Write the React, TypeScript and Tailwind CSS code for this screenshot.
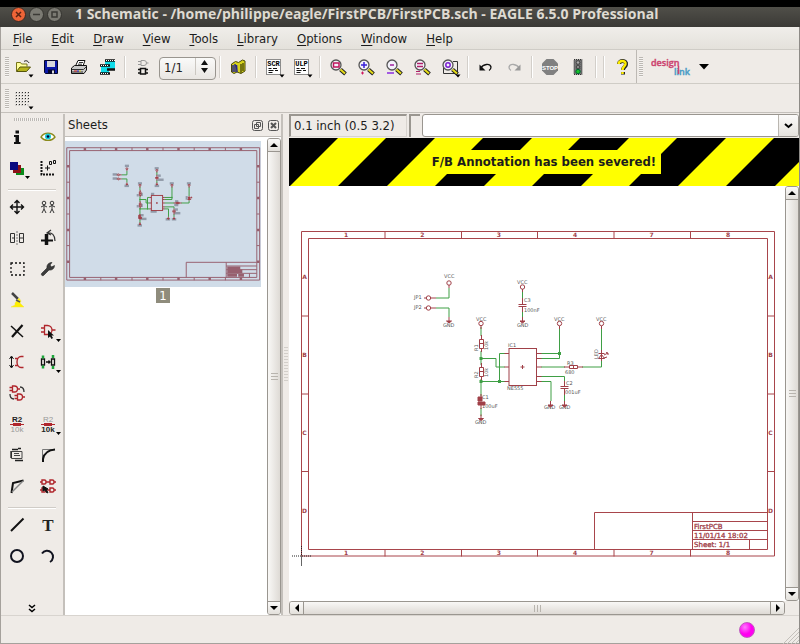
import type { ReactNode } from 'react';

const RED = '#a04048';
const GREEN = '#3f9f45';

/* ---------- shared pieces ---------- */

function Glyph({ children, drop }: { children: ReactNode; drop?: boolean }) {
  return (
    <svg viewBox="-14 -14 28 28" className="size-7 shrink-0" fill="none" stroke="#111" aria-hidden="true">
      {children}
      {drop && <path d="M5.500 7.500h5l-2.500 3z" fill="#000" stroke="none" />}
    </svg>
  );
}

function BarButton({ label, children, drop }: { label: string; children: ReactNode; drop?: boolean }) {
  return (
    <button type="button" aria-label={label} className="flex h-full w-7 shrink-0 items-center justify-center">
      <Glyph drop={drop}>{children}</Glyph>
    </button>
  );
}

function Separator() {
  return (
    <div className="flex h-full w-2 shrink-0 items-center justify-center">
      <div className="h-[22px] w-[2px] border-r border-l border-r-white border-l-[#d3cfca]" />
    </div>
  );
}

function Handle() {
  return (
    <div className="h-5 w-1 shrink-0 bg-[repeating-linear-gradient(180deg,#bcb8b3_0px,#bcb8b3_1px,#f6f4f2_1px,#f6f4f2_2px)]" />
  );
}

function Magnifier({ children }: { children: ReactNode }) {
  return (
    <>
      <path d="M2.500 2.500L7.500 7" stroke="#222" strokeWidth="4" />
      <path d="M2.500 2.500L7 6.500" stroke="#e6dc18" strokeWidth="2" />
      <circle cx="-2" cy="-2" r="5" fill="#f3f1fa" stroke="#555" strokeWidth="1.300" />
      {children}
    </>
  );
}

function ScriptSheet({ text }: { text: string }) {
  return (
    <>
      <rect x="-7.500" y="-7.500" width="14" height="15" fill="#fff" stroke="#222" strokeDasharray="1 1" />
      <text x="-0.500" y="-1" fontSize="7" fontWeight="700" fontFamily="Liberation Mono, monospace" textAnchor="middle" fill="#000" stroke="none">
        {text}
      </text>
      <path d="M-5.500 1.500h3M-1 1.500h4M-5.500 3.500h5M1 3.500h3M-5.500 5.500h4" />
    </>
  );
}

/* ---------- schematic ---------- */

type Label = { x: number; y: number; t: string; w: number; turn?: boolean };

const labels: Label[] = [
  { x: 444, y: 278, t: 'VCC', w: 8 },
  { x: 517, y: 284, t: 'VCC', w: 8 },
  { x: 476, y: 321, t: 'VCC', w: 8 },
  { x: 554, y: 321, t: 'VCC', w: 8 },
  { x: 596, y: 321, t: 'VCC', w: 8 },
  { x: 414, y: 299, t: 'JP1', w: 10 },
  { x: 414, y: 309, t: 'JP2', w: 10 },
  { x: 443, y: 327, t: 'GND', w: 9 },
  { x: 517, y: 327, t: 'GND', w: 9 },
  { x: 475, y: 424, t: 'GND', w: 9 },
  { x: 544, y: 409, t: 'GND', w: 9 },
  { x: 559, y: 409, t: 'GND', w: 9 },
  { x: 524, y: 302, t: 'C3', w: 6 },
  { x: 524, y: 312, t: '100nF', w: 13 },
  { x: 508, y: 347, t: 'IC1', w: 6 },
  { x: 507, y: 390, t: 'NE555', w: 13 },
  { x: 567, y: 365, t: 'R3', w: 6 },
  { x: 565, y: 374, t: '680', w: 8 },
  { x: 566, y: 385, t: 'C2', w: 6 },
  { x: 565, y: 394, t: '001uF', w: 13 },
  { x: 482, y: 399, t: 'C1', w: 6 },
  { x: 482, y: 408, t: '100uF', w: 13 },
  { x: 478, y: 351, t: 'R1', w: 6, turn: true },
  { x: 488, y: 350, t: '10k', w: 8, turn: true },
  { x: 478, y: 378, t: 'R2', w: 6, turn: true },
  { x: 488, y: 377, t: '10k', w: 8, turn: true },
  { x: 598, y: 359, t: 'LED', w: 9, turn: true },
];

const supplies = [[449, 283], [522.5, 287], [481, 323.5], [559.5, 323.5], [601.5, 323.5], [428.5, 298], [428.5, 308]];
const grounds = [[449, 321], [522.5, 321], [481, 418.5], [550.5, 405], [564.5, 405]];
const junctions = [[481, 358.5], [481, 381.5], [499.5, 381.5], [559.5, 353.5]];
const columns = ['1', '2', '3', '4', '7', '8'];
const rows = ['A', 'B', 'C', 'D'];

function Schematic({ thumb = false }: { thumb?: boolean }) {
  const sw = thumb ? 2.4 : 1;
  return (
    <g fill="none" strokeWidth={sw}>
      <g stroke={thumb ? '#97606f' : '#a8454b'}>
        <path d="M301.500 231.500H774.500V556H301.500ZM308.500 238.500H767.500V549.500H308.500Z" />
        {[385, 461.5, 537.5, 614, 690.5].map((x) => (
          <path key={x} d={`M${x} 231.500v7M${x} 549.500v7`} />
        ))}
        {[316, 394, 471.5].map((y) => (
          <path key={y} d={`M301.500 ${y}h7M767.500 ${y}h7`} />
        ))}
        <path d="M594.500 549.500V512.500H767.500M692.500 512.500V549.500M692.500 521.500H767.500M692.500 530.500H767.500M692.500 539.500H767.500M749.500 539.500V549.500" />
      </g>
      {thumb ? (
        <g fill="#97606f">
          {columns.map((c, i) => (
            <path key={c} d={`M${343 + i * 76.5} 232h6v6h-6zM${343 + i * 76.5} 550h6v6h-6z`} />
          ))}
          {rows.map((r, i) => (
            <path key={r} d={`M302 ${274 + i * 78}h6v6h-6zM768 ${274 + i * 78}h6v6h-6z`} />
          ))}
          <path d="M695 523h32v7h5v9h-37zM695 541h24v7h-24zM722 541h14v7h-14z" />
        </g>
      ) : (
        <g fill={RED} fontFamily="DejaVu Sans, sans-serif" fontSize="6" fontWeight="700">
          {columns.map((c, i) => (
            <g key={c} textAnchor="middle">
              <text x={346 + i * 76.4} y="237">{c}</text>
              <text x={346 + i * 76.4} y="555">{c}</text>
            </g>
          ))}
          {rows.map((r, i) => (
            <g key={r} textAnchor="middle">
              <text x="304.500" y={279 + i * 78}>{r}</text>
              <text x="770.500" y={279 + i * 78}>{r}</text>
            </g>
          ))}
          <g fontSize="7" fontWeight="400" stroke={RED} strokeWidth="0.300">
            <text x="694" y="529">FirstPCB</text>
            <text x="694" y="538">11/01/14 18:02</text>
            <text x="694" y="547">Sheet: 1/1</text>
          </g>
        </g>
      )}
      <path
        stroke={GREEN}
        d="M449 288V298H436M436 308H449V317M522.500 291V299M522.500 311V318M481 327V336M481 351V365M481 358.500H496V367H505M481 379V396M481 381.500H505M499.500 381.500V353.500H505M481 408V416M541 353.500H559.500V327M559.500 353.500V358.500H541M541 367H565M582 367H601.500V361M601.500 327V350M541 376.500H564.500V381M541 381.500H551V401M564.500 394V401"
      />
      <g fill={GREEN}>
        {junctions.map(([x, y]) => (
          <rect key={`${x}-${y}`} x={x - 1.5} y={y - 1.5} width="3" height="3" />
        ))}
      </g>
      {labels.map((l) =>
        thumb ? (
          <rect
            key={`${l.x}-${l.y}`}
            x={l.turn ? l.x - 5 : l.x}
            y={l.turn ? l.y - l.w : l.y - 5}
            width={l.turn ? 5 : l.w + 2}
            height={l.turn ? l.w : 6}
            fill="#7d8694"
            fillOpacity="0.750"
          />
        ) : (
          <text
            key={`${l.x}-${l.y}`}
            x={l.x}
            y={l.y}
            fontSize="5"
            fontFamily="DejaVu Sans, sans-serif"
            fill="#555"
            transform={l.turn ? `rotate(-90 ${l.x} ${l.y})` : undefined}
          >
            {l.t}
          </text>
        ),
      )}
      <g stroke={RED}>
        <rect x="509" y="348.500" width="27.500" height="37" />
        <path d="M522.500 365v4M520.500 367h4M504.500 353.500H509M504.500 367H509M504.500 381.500H509M537 353.500h4.500M537 358.500h4.500M537 367h4.500M537 376.500h4.500M537 381.500h4.500" />
        <path d="M481.500 335v4M481.500 349v3M479.500 339.500h4v9h-4zM479.500 343.500h4M481.500 363v4M481.500 377v3M479.500 367.500h4v9h-4zM479.500 371.500h4" />
        <path d="M564 367h5M578 367h5M569.500 365.500h8v3h-8zM573.500 365v4" />
        <path d="M522.500 298v6M522.500 307v5M518.500 304.500h8M518.500 306.500h8M564.500 381v5M564.500 389v6M560.500 386.500h8M560.500 388.500h8" />
        <path d="M481 394v4M481 405v4M478 403.500h6" />
        <path d="M478 397h4v4h-4zM478 402h7v3h-7z" fill={RED} />
        <path d="M598.500 353.500h6M601.500 350v11M598.500 358.500h6l-3-4zM604 355l4-2M604 358l3-1M606 352.500l2 0.500v2" />
        {supplies.map(([x, y]) => (
          <circle key={`${x}-${y}`} cx={x} cy={y} r="2.200" fill={thumb ? 'none' : '#fff'} />
        ))}
        <path d="M449 285v3M522.500 289v3M481 326v3M559.500 326v3M601.500 326v3M431 298h5M431 308h5M424 298h2M424 308h2" />
        {grounds.map(([x, y]) => (
          <path key={`${x}-${y}`} d={`M${x} ${y - 4}v4M${x - 2.5} ${y}h5l-2.500 2z`} fill={RED} />
        ))}
      </g>
      {!thumb && (
        <g stroke="#222">
          <path d="M292 556H312" strokeDasharray="1 1" />
          <path d="M301.500 546V556" strokeDasharray="1 1" />
          <path d="M301.500 556V566" stroke="#666" />
        </g>
      )}
    </g>
  );
}

/* ---------- scroll bars ---------- */

function ScrollArrow({ label, d, className }: { label: string; d: string; className: string }) {
  return (
    <button type="button" aria-label={label} className={`flex shrink-0 items-center justify-center bg-linear-to-b from-[#fbfaf9] to-[#e3e0db] ${className}`}>
      <svg viewBox="0 0 8 8" className="size-2" fill="#000" aria-hidden="true">
        <path d={d} />
      </svg>
    </button>
  );
}

function VerticalScroll() {
  return (
    <div className="flex w-[14px] shrink-0 flex-col rounded-[3px] border border-[#9a9690] bg-linear-to-r from-[#f9f8f6] to-[#dedad5]">
      <ScrollArrow label="Scroll up" d="M0 6h8L4 2z" className="h-[13px] rounded-t-[2px] border-b border-[#9a9690]" />
      <div className="flex flex-1 items-center justify-center">
        <div className="h-[7px] w-[7px] bg-[repeating-linear-gradient(180deg,#b8b4ae_0px,#b8b4ae_1px,transparent_1px,transparent_3px)]" />
      </div>
      <ScrollArrow label="Scroll down" d="M0 2h8L4 6z" className="h-[13px] rounded-b-[2px] border-t border-[#9a9690]" />
    </div>
  );
}

function HorizontalScroll() {
  return (
    <div className="flex h-[14px] flex-1 rounded-[3px] border border-[#9a9690] bg-linear-to-b from-[#f9f8f6] to-[#dedad5]">
      <ScrollArrow label="Scroll left" d="M6 0v8L2 4z" className="w-[14px] rounded-l-[2px] border-r border-[#9a9690]" />
      <div className="flex flex-1 items-center justify-center">
        <div className="h-[7px] w-[7px] bg-[repeating-linear-gradient(90deg,#b8b4ae_0px,#b8b4ae_1px,transparent_1px,transparent_3px)]" />
      </div>
      <ScrollArrow label="Scroll right" d="M2 0v8l4-4z" className="w-[14px] rounded-r-[2px] border-l border-[#9a9690]" />
    </div>
  );
}

/* ---------- left tool palette ---------- */

const andGate = 'M-2 -3h2a3 3 0 0 1 0 6h-2zM-5 -1.500h3M-5 1.500h3M3 0h2.500';

function Person({ x }: { x: number }) {
  return (
    <g transform={`translate(${x} 0)`} stroke="#333">
      <circle cx="0" cy="-4" r="1.800" />
      <path d="M0 -2V2L-2 6M0 2L2 6M-3 0L0 -1.500L3 0" />
    </g>
  );
}

const topTools: [string, ReactNode, boolean?][] = [
  ['Info', <path key="i" d="M-1.500 -6.500h3.500v3h-3.500zM-3 -2h5v7h1.500v2h-6.500v-2h1.500v-5h-1.500z" fill="#111" stroke="none" />],
  ['Show', (
    <g key="e">
      <path d="M-7 0C-4 -5 4 -5 7 0C4 4.500 -4 4.500 -7 0z" fill="#fff" stroke="#8b8a1d" strokeWidth="1.400" />
      <circle cx="0" cy="-0.500" r="3" fill="#19c8d8" stroke="none" />
      <circle cx="0" cy="-0.500" r="1.300" fill="#003" stroke="none" />
    </g>
  )],
  ['Layers', (
    <g key="l" stroke="none">
      <rect x="-1" y="0" width="8" height="7" fill="#0a8a1a" />
      <rect x="-4" y="-3" width="8" height="8" fill="#8c1218" />
      <rect x="-7" y="-6" width="8" height="8" fill="#0a0a80" />
    </g>
  ), true],
  ['Mark', (
    <g key="m">
      <path d="M-6.500 -7V6.500H7" strokeWidth="2" strokeDasharray="2 1" />
      <path d="M-3 0h5M-0.500 -2.500v5M1.500 -6.500h2v3h-2zM5.500 -7.500h2v3h-2z" />
    </g>
  )],
];

const editTools: [string, ReactNode, boolean?][] = [
  ['Move', <path key="a" d="M-6.500 0H6.500M0 -6.500V6.500M-4 -2.500L-6.500 0L-4 2.500M4 -2.500L6.500 0L4 2.500M-2.500 -4L0 -6.500L2.500 -4M-2.500 4L0 6.500L2.500 4" strokeWidth="1.400" />],
  ['Copy', <g key="b"><Person x={-4} /><Person x={4} /></g>],
  ['Mirror', (
    <g key="c">
      <path d="M-6.500 -4.500H-2.500V4.500H-6.500zM-5 0H-2.500M2.500 -4.500H6.500M2.500 4.500H6.500M2.500 -4.500V4.500M2.500 0H6.500M6.500 -4.500V4.500" stroke="#333" />
      <path d="M0 -7V7" stroke="#777" strokeDasharray="2 1" />
    </g>
  )],
  ['Rotate', (
    <g key="d">
      <path d="M-1.500 -4V7" strokeWidth="3.500" />
      <path d="M-7 2.500H5" strokeWidth="2" />
      <path d="M-1 -5C4 -6 7 -3 7 3M3 -8L-1 -5L3 -3" stroke="#333" strokeWidth="1.200" />
    </g>
  )],
  ['Group', <rect key="e" x="-6" y="-6" width="13" height="12" strokeDasharray="2 2" strokeWidth="1.300" />],
  ['Change', (
    <path
      key="f"
      d="M-6.500 4.500L-1 -1C-1.500 -4 0.500 -6.500 4 -6.500L2 -4L3.500 -2L6.500 -3.500C6.500 -0.500 4 1.500 1 1L-4.500 6.500C-6 7 -7 6 -6.500 4.500z"
      fill="#3c3c3c"
      stroke="#222"
      strokeWidth="0.600"
    />
  )],
  ['Paste', <g key="g"><path d="M-5 -7L1 -1" strokeWidth="2.500" stroke="#444" /><path d="M-2 3L2 -2L4 1L3 3L7 7H-6L-2 5z" fill="#ffef00" stroke="#f0e24a" strokeWidth="0.500" /><path d="M-1 0L3 2" stroke="#555" strokeWidth="1.500" /></g>],
  ['', null],
  ['Delete', <g key="h"><path d="M-6 -5L6 6" strokeWidth="1.500" /><path d="M5.500 -6L-5 6" strokeWidth="2.200" /></g>],
  ['Add', (
    <g key="i">
      <path d="M-3.500 -5.500h3a4.500 4.500 0 0 1 0 9h-3zM-7 -3h3.500M-7 1h3.500M4 -1h3.500" stroke="#b0262c" strokeWidth="1.300" />
      <path d="M0 -1V7l2-1.500 1.500 2.500 1.500-1-1.500-2.500H6z" fill="#111" stroke="none" />
    </g>
  ), true],
  ['Pinswap', <g key="j"><path d="M-5.500 -5V5M-7.500 -3L-5.500 -6L-3.500 -3M-7.500 3L-5.500 6L-3.500 3" /><path d="M6.500 -5.500H4a4 5.500 0 0 0 0 11H6.500M-2 -3.500H1M-2 3.500H1" stroke="#b0262c" strokeWidth="1.400" /></g>],
  ['Replace', (
    <g key="k">
      <path d="M-6.500 -3h3v6h-3zM-2 0h4M0.500 -1.500L2 0L0.500 1.500M3.500 -3h3v6h-3z" strokeWidth="1.300" />
      <path d="M-5 -6.500v3M-5 3.500v3M5 -7v3M5 4v3" stroke="#1ca53a" strokeWidth="2.500" />
    </g>
  ), true],
  ['Gateswap', (
    <g key="l" stroke="#b0262c" strokeWidth="1.300">
      <g transform="translate(-2.500 -4)"><path d={andGate} /></g>
      <g transform="translate(2.500 4)"><path d={andGate} /></g>
      <path d="M3 -6C6 -6 7 -4 7 -1M-3 6C-6 6 -7 4 -7 1" stroke="#333" />
    </g>
  )],
  ['', null],
  ['Name', (
    <g key="m" stroke="none" fontFamily="Liberation Sans, sans-serif" fontSize="8" textAnchor="middle">
      <text x="0" y="-2" fill="#222" fontWeight="700">R2</text>
      <path d="M-7 0.500h14" stroke="#b0262c" /><path d="M-4 -1h8v3h-8z" fill="#b0262c" />
      <text x="0" y="8" fill="#999">10k</text>
    </g>
  )],
  ['Value', (
    <g key="n" stroke="none" fontFamily="Liberation Sans, sans-serif" fontSize="8" textAnchor="middle">
      <text x="0" y="-2" fill="#999">R2</text>
      <path d="M-7 0.500h14" stroke="#b0262c" /><path d="M-4 -1h8v3h-8z" fill="#b0262c" />
      <text x="0" y="8" fill="#222" fontWeight="700">10k</text>
    </g>
  ), true],
  ['Smash', (
    <g key="o">
      <path d="M-5.500 -3.500H5V3.500H-5.500zM-3 -1.500h5M-3 0.500h6" stroke="#444" />
      <path d="M-5 -5.500H1M1 -6.500H4M-2 5.500H6M-6 -4V3" stroke="#222" strokeWidth="1.300" />
    </g>
  )],
  ['Miter', <g key="p"><path d="M-5.500 -5.500H6M-5.500 -5.500V6" stroke="#777" /><path d="M-5 7V4C-4 -1 0 -5 7 -5.500" strokeWidth="2" /></g>],
  ['Split', <g key="q"><path d="M-5.500 7L-4 -3L6.500 -5.500" strokeWidth="2" /><path d="M-5 6L6 -5" stroke="#888" strokeWidth="1.500" /></g>],
  ['Invoke', (
    <g key="r" stroke="#b0262c" strokeWidth="1.400">
      <path d="M-6 -6h2.500a1.500 2 0 0 1 0 4H-6zM2 -6h2.500a1.500 2 0 0 1 0 4H2zM2 2h2.500a1.500 2 0 0 1 0 4H2zM-6 2h2.500a1.500 2 0 0 1 0 4H-6zM-8 -4h2M-1.500 -4H2M6 -4h2M-1.500 4H2M6 4h2M-8 4h2" />
      <path d="M-5 0l5 3-2 0.500 2 3-1 0.500-2-3-2 1z" fill="#111" stroke="#111" strokeWidth="1" />
    </g>
  )],
];

const drawTools: [string, ReactNode, boolean?][] = [
  ['Wire', <path key="a" d="M-6 6L6.500 -6.500" strokeWidth="2" />],
  ['Text', <text key="b" x="0" y="6" fontSize="17" fontWeight="700" textAnchor="middle" fontFamily="Liberation Serif, serif" fill="#222" stroke="none">T</text>],
  ['Circle', <circle key="c" cx="0" cy="0" r="6" stroke="#11131f" strokeWidth="2" />],
  ['Arc', <path key="d" d="M-6 -2.500A6 6 0 1 1 2 6" stroke="#11131f" strokeWidth="2" />],
];

function ToolGrid({ tools }: { tools: [string, ReactNode, boolean?][] }) {
  return (
    <div className="grid grid-cols-2">
      {tools.map(([label, art, drop], i) =>
        label ? (
          <button key={label} type="button" aria-label={label} className="flex h-[31px] items-center justify-center">
            <svg viewBox="-15 -15 30 30" className="size-[30px]" fill="none" stroke="#111" aria-hidden="true">
              {art}
              {drop && <path d="M8 8h5l-2.500 3z" fill="#000" stroke="none" />}
            </svg>
          </button>
        ) : (
          <div key={`gap-${i}`} />
        ),
      )}
    </div>
  );
}

function ToolRule() {
  return <div className="mx-[7px] mt-[6px] h-[2px] border-t border-b border-t-[#d0ccc7] border-b-white" />;
}

/* ---------- page ---------- */

const menus = ['File', 'Edit', 'Draw', 'View', 'Tools', 'Library', 'Options', 'Window', 'Help'];

function TitleBar() {
  return (
    <header className="flex h-[27px] items-center border-t-[7px] border-black bg-linear-to-b from-[#504f49] to-[#3b3a36] pl-[11px]">
      <div className="flex items-center gap-[3px] pb-[6px]">
        <button type="button" aria-label="Close" className="size-[15px] rounded-full border border-[#3a2a24] bg-[#ee6437]">
          <svg viewBox="0 0 13 13" className="size-[13px]" stroke="#5b2413" strokeWidth="1.500"><path d="M4 4l5 5M9 4l-5 5" /></svg>
        </button>
        <button type="button" aria-label="Minimize" className="size-[15px] rounded-full border border-[#33322e] bg-[#7b7a73]">
          <svg viewBox="0 0 13 13" className="size-[13px]" stroke="#3b3a36" strokeWidth="1.500"><path d="M3 6.500h7" /></svg>
        </button>
        <button type="button" aria-label="Maximize" className="size-[15px] rounded-full border border-[#33322e] bg-[#7b7a73]">
          <svg viewBox="0 0 13 13" className="size-[13px]" stroke="#3b3a36" strokeWidth="1.500" fill="none"><path d="M4 4h5v5H4z" /></svg>
        </button>
      </div>
      <h1 className="ml-[13px] pb-[6px] font-['Open_Sans',sans-serif] text-[14px] leading-5 font-bold whitespace-nowrap text-[#dfdbd2]">
        1 Schematic - /home/philippe/eagle/FirstPCB/FirstPCB.sch - EAGLE 6.5.0 Professional
      </h1>
    </header>
  );
}

function MainToolbar() {
  return (
    <div className="flex h-[35px] items-center border-t border-b border-t-[#cfccc6] border-b-[#cfccc6] pl-1">
      <Handle />
      <BarButton label="Open" drop>
        <path d="M-6.500 4V-4.500h4l1 1.500h5.500v2.500" fill="#ffff9c" stroke="#77751a" />
        <path d="M-6.500 4.500L-3 0H7.500L3.500 4.500z" fill="#b5b31c" stroke="#55540c" />
        <path d="M1 -5.500C3 -7 5 -6 6 -4" />
      </BarButton>
      <BarButton label="Save">
        <path d="M-6.500 -6.500h13v13h-12l-1-1z" fill="#0b18a8" stroke="#05062c" />
        <path d="M-4 -6h8v6h-8z" fill="#d7d7dc" stroke="none" />
        <path d="M-3 2.500h7v4h-7z" fill="#05062c" stroke="none" /><path d="M1 3.500h2v3H1z" fill="#ddd" stroke="none" />
      </BarButton>
      <BarButton label="Print">
        <path d="M-3.500 -1L-1 -6.500H6L4 -1z" fill="#fff" />
        <path d="M-7.500 1l3-2.500H7.500V3L5 6.500H-7.500z" fill="#c9c9c9" />
        <path d="M-7 2.500H4.500L7 0M-7 5h11M0 -4.500h4M-1 -2.800h4" stroke="#333" />
        <path d="M-5 4h3" stroke="#c22" /><path d="M-2 4h2" stroke="#22c" /><path d="M0 4h2" stroke="#dc2" />
      </BarButton>
      <BarButton label="Manufacturing">
        <path d="M-2 -7H8V2H2V7H-6V-1H-2z" fill="#10dcea" stroke="none" />
        <path d="M-2 -6.500H8M-7 -1.500H3M0 2.500H8M-7 6.500H3" strokeWidth="2.500" />
        <path d="M-1 -6.500H8M-6 -1.500H2M-6 6.500H2" stroke="#fff" strokeDasharray="1 1" />
      </BarButton>
      <Separator />
      <BarButton label="Board">
        <path d="M-2 -6.500h3a2.500 2.500 0 0 1 0 5h-3zM-5 -5.500h3M-5 -2.500h3M3.500 -4h2" stroke="#999" />
        <path d="M-2.500 1.500h5v5.500h-5zM-5 2.500h2M-5 6h2M3 2.500h2M3 6h2" strokeWidth="1.500" />
      </BarButton>
      <div className="relative ml-[2px] h-[23px] w-[57px] shrink-0">
        <select aria-label="Sheet" className="size-full appearance-none rounded-[4px] border border-[#99958f] bg-linear-to-b from-[#fafaf9] to-[#e9e6e2] pl-1 text-[13px] leading-5 text-[#222]">
          <option>1/1</option>
        </select>
        <svg viewBox="0 0 20 21" className="pointer-events-none absolute top-px right-px h-[21px] w-5" aria-hidden="true">
          <path d="M0.500 2v17" stroke="#cbc7c1" />
          <path d="M6 9h7l-3.500-5zM6 12h7l-3.500 5z" fill="#111" />
        </svg>
      </div>
      <Separator />
      <BarButton label="Library">
        <path d="M-6.500 -3l4-2.500 3 1 4-2.500 2.500 1V4L3 6.500-1 5-4 6.500-6.500 5z" fill="#d6d21d" stroke="#4a4908" />
        <path d="M-5 -2V5M-1.500 -2L-1 5M-3 -3V5" stroke="#24258a" strokeWidth="1.500" />
        <path d="M3 -3V6M5 -4V4" stroke="#77760f" strokeWidth="2" />
      </BarButton>
      <Separator />
      <BarButton label="Script" drop><ScriptSheet text="SCR" /></BarButton>
      <BarButton label="ULP" drop><ScriptSheet text="ULP" /></BarButton>
      <Separator />
      <BarButton label="Zoom to fit"><Magnifier><path d="M-4.500 -4h5.500v4h-5.500z" stroke="#c0145c" strokeWidth="1.500" /></Magnifier></BarButton>
      <BarButton label="Zoom in"><Magnifier><path d="M-5 -2h6M-2 -5v6" stroke="#3a20d8" strokeWidth="1.500" /><path d="M-5 6h3M-3.500 4.500v3" stroke="#d01860" /></Magnifier></BarButton>
      <BarButton label="Zoom out"><Magnifier><path d="M-4 -2h4" stroke="#a0209c" strokeWidth="1.500" /><path d="M-7 6h7" stroke="#8a2ae0" strokeWidth="1.500" /></Magnifier></BarButton>
      <BarButton label="Redraw"><Magnifier><path d="M-5 -3.500h6M-5 -0.500h6" stroke="#b02068" strokeWidth="1.500" /><path d="M-6 4.500h4M-6 7h5" stroke="#b02068" /></Magnifier></BarButton>
      <BarButton label="Zoom select" drop>
        <path d="M-6.500 -2V6.500H7.500V-5.500H3" stroke="#333" />
        <Magnifier><circle cx="-2" cy="-2" r="2.200" stroke="#7a20d0" strokeWidth="1.500" /></Magnifier>
      </BarButton>
      <Separator />
      <BarButton label="Undo"><path d="M-5 1C-3 -3 4 -4 5 0C5 2 4 3 3 3.500" strokeWidth="1.300" /><path d="M-6.500 -2.500V3.500H-0.500z" fill="#111" stroke="none" /></BarButton>
      <BarButton label="Redo"><path d="M5 1C3 -3 -4 -4 -5 0C-5 2 -4 3 -3 3.500" stroke="#aaa" strokeWidth="1.300" /><path d="M6.500 -2.500V3.500H0.500z" fill="#999" stroke="none" /></BarButton>
      <Separator />
      <BarButton label="Stop">
        <path d="M-3.500 -8h7l4.500 4.500v7l-4.500 4.500h-7L-8 3.500v-7z" fill="#808080" stroke="none" />
        <text x="0" y="2.500" fontSize="6" fontWeight="700" textAnchor="middle" fontFamily="Liberation Sans, sans-serif" fill="#fff" stroke="none">STOP</text>
      </BarButton>
      <BarButton label="Go">
        <path d="M-4 -7.500h8v15h-8z" fill="#777" stroke="#333" strokeDasharray="1 1" />
        <path d="M-1 -7v14M2 -7v10" stroke="#555" strokeDasharray="1 1" />
        <circle cx="0" cy="-4.500" r="1.800" fill="#aaa" stroke="#444" /><circle cx="0" cy="0" r="1.800" fill="#888" stroke="#444" />
        <circle cx="0" cy="4.500" r="2.200" fill="#16c02a" stroke="#063" />
      </BarButton>
      <Separator />
      <Separator />
      <BarButton label="Help">
        <path d="M-3 -3C-3 -7 5 -7 4 -2.500C3.500 0 1 0 1 3M1 5v2.500" stroke="#222" strokeWidth="4" />
        <path d="M-3.500 -3C-3 -7 4 -7 3.500 -3C3 -0.500 0.500 0 0.500 3M0.500 5v2" stroke="#ffee00" strokeWidth="2.500" />
      </BarButton>
      <div className="mr-[2px] h-full w-px bg-[#bdb9b4]" />
      <Handle />
      <button type="button" aria-label="design link" className="ml-2 flex items-center gap-2">
        <svg viewBox="0 0 40 26" className="h-[26px] w-10" fontFamily="Open Sans, sans-serif" fontWeight="600" aria-hidden="true">
          <text x="0" y="12" fontSize="9" fill="#cc4470" stroke="#cc4470" strokeWidth="0.400">design</text>
          <text x="23" y="21" fontSize="9" fill="#4a9cc6" stroke="#4a9cc6" strokeWidth="0.400">link</text>
          <path d="M27.500 12v8" stroke="#cc4470" strokeWidth="1.500" />
        </svg>
        <svg viewBox="0 0 10 6" className="h-[6px] w-[10px]" aria-hidden="true"><path d="M0 0h10L5 5.500z" /></svg>
      </button>
    </div>
  );
}

function SheetsPanel() {
  return (
    <section aria-label="Sheets" className="flex w-[220px] shrink-0 flex-col border-r-2 border-l-2 border-r-[#c4c0bb] border-l-[#c4c0bb]">
      <div className="flex h-[23px] shrink-0 items-center gap-[5px] border-b border-[#c4c0bb] pr-[2px] pl-[3px]">
        <h2 className="flex-1 text-[13px]">Sheets</h2>
        <button type="button" aria-label="Float panel">
          <svg viewBox="0 0 11 11" className="size-[11px]" fill="none" stroke="#555" aria-hidden="true">
            <rect x="0.500" y="0.500" width="10" height="10" rx="2" /><path d="M4.500 2.500h4v4h-4zM2.500 4.500h4v4h-4z" />
          </svg>
        </button>
        <button type="button" aria-label="Close panel">
          <svg viewBox="0 0 11 11" className="size-[11px]" fill="none" stroke="#555" aria-hidden="true">
            <rect x="0.500" y="0.500" width="10" height="10" rx="2" /><path d="M3 3l5 5M8 3l-5 5" strokeWidth="2" />
          </svg>
        </button>
      </div>
      <div className="flex flex-1 bg-white pt-px">
        <div className="flex flex-1 flex-col items-start pt-[3px]">
          <button type="button" className="flex w-[196px] flex-col items-center gap-px">
            <svg viewBox="297.500 215 480 358" className="h-[146px] w-[196px] bg-[#d0dce8]" aria-hidden="true">
              <Schematic thumb />
            </svg>
            <span className="bg-[#8f8c7c] px-[3px] text-[13px] leading-[15px] text-white">1</span>
          </button>
        </div>
        <VerticalScroll />
      </div>
    </section>
  );
}

function Tape() {
  return (
    <div className="relative flex h-12 shrink-0 items-center justify-center">
      <svg className="absolute inset-0 size-full" aria-hidden="true">
        <defs>
          <pattern id="tape" width="97" height="48" patternUnits="userSpaceOnUse">
            <rect width="97" height="48" fill="#ffff00" />
            <path d="M0 0H49L1 48H0zM97 0L49 48H97z" fill="#000" />
          </pattern>
        </defs>
        <rect width="100%" height="100%" fill="url(#tape)" />
      </svg>
      <p role="alert" className="relative bg-[#ffff00] px-[5px] text-[13px] leading-6 font-bold">
        F/B Annotation has been severed!
      </p>
    </div>
  );
}

export default function App() {
  return (
    <div className="flex min-h-screen flex-col bg-[#efebe7] font-['DejaVu_Sans_Condensed','DejaVu_Sans',sans-serif] text-[#1c1c1c]">
      <TitleBar />
      <div className="flex flex-1 flex-col border-r border-b border-l border-r-[#8e8b87] border-b-[#a5a19c] border-l-[#a5a19c]">
        <nav className="flex h-[22px] items-center gap-px bg-linear-to-b from-[#f0eeea] to-[#e4e1db] pt-[2px] pl-[3px]">
          {menus.map((m) => (
            <button key={m} type="button" className="px-[9px] text-[13px]">
              <span className="underline underline-offset-2">{m[0]}</span>
              {m.slice(1)}
            </button>
          ))}
        </nav>
        <MainToolbar />
        <div className="flex h-[29px] items-center border-b border-[#c4c0bb] pt-[2px] pl-1">
          <Handle />
          <BarButton label="Grid" drop>
            <path d="M-7 -6.500H7M-7 -3.500H7M-7 -0.500H7M-7 2.500H7M-7 5.500H4" strokeDasharray="1 2" />
            <path d="M-7 -6.500V7M-4 -6.500V7M-1 -6.500V7M2 -6.500V7M5 -6.500V7" stroke="#888" strokeDasharray="1 2" />
          </BarButton>
        </div>
        <main className="flex flex-1 pt-px">
          <aside aria-label="Tools" className="flex w-[62px] shrink-0 flex-col">
            <div className="mx-auto mt-1 h-[3px] w-9 bg-[repeating-linear-gradient(90deg,#bcb8b3_0px,#bcb8b3_1px,#f6f4f2_1px,#f6f4f2_2px)]" />
            <ToolGrid tools={topTools} />
            <ToolRule />
            <ToolGrid tools={editTools} />
            <ToolRule />
            <ToolGrid tools={drawTools} />
            <button type="button" aria-label="More tools" className="mx-auto mt-auto mb-[2px]">
              <svg viewBox="0 0 8 9" className="h-[9px] w-2" fill="none" stroke="#000" strokeWidth="1.500" aria-hidden="true">
                <path d="M1 1l3 2.500L7 1M1 5l3 2.500L7 5" />
              </svg>
            </button>
          </aside>
          <SheetsPanel />
          <div className="flex w-[6px] shrink-0 items-center justify-center">
            <div className="h-9 w-1 bg-[repeating-linear-gradient(180deg,#d2cec9_0px,#d2cec9_1px,transparent_1px,transparent_3px)]" />
          </div>
          <section aria-label="Schematic editor" className="flex min-w-0 flex-1 flex-col">
            <div className="flex h-[24px] shrink-0 items-stretch gap-[2px] pb-px">
              <output className="w-[118px] border-t-2 border-r border-b border-l-2 border-t-[#9a9690] border-r-[#d8d4cf] border-b-[#d8d4cf] border-l-[#9a9690] pl-[3px] text-[13px] leading-5">
                0.1 inch (0.5 3.2)
              </output>
              <div className="w-[11px] border-t-2 border-l-2 border-[#9a9690]" />
              <div className="flex flex-1 rounded-[3px] border border-[#9a9690] bg-white">
                <input aria-label="Command" className="min-w-0 flex-1 px-1 text-[13px] outline-none" />
                <button type="button" aria-label="Command history" className="flex w-5 items-center justify-center rounded-r-[2px] border-l border-[#bab6b0] bg-linear-to-b from-[#fbfaf9] to-[#e6e3de]">
                  <svg viewBox="0 0 9 6" className="h-[6px] w-[9px]" fill="none" stroke="#000" strokeWidth="2" aria-hidden="true"><path d="M1 1l3.500 3L8 1" /></svg>
                </button>
              </div>
            </div>
            <Tape />
            <div className="flex flex-1 bg-white">
              <svg viewBox="289 186 496 415" className="min-w-0 flex-1" role="img" aria-label="Schematic sheet 1">
                <Schematic />
              </svg>
              <VerticalScroll />
            </div>
            <div className="flex shrink-0 pr-[14px]">
              <HorizontalScroll />
            </div>
          </section>
        </main>
        <footer className="flex h-7 items-center justify-end border-t border-[#d8d4cf]">
          <div className="mr-6 size-4 rounded-full border border-[#c05cc0] bg-radial-[at_35%_30%] from-[#ff7cff] to-[#ff00f0] to-50%" />
          <svg viewBox="0 0 20 28" className="h-7 w-5" stroke="#c4c0bb" aria-hidden="true">
            <path d="M4 28L20 12M8 28L20 16M12 28L20 20M16 28L20 24" />
          </svg>
        </footer>
      </div>
    </div>
  );
}
